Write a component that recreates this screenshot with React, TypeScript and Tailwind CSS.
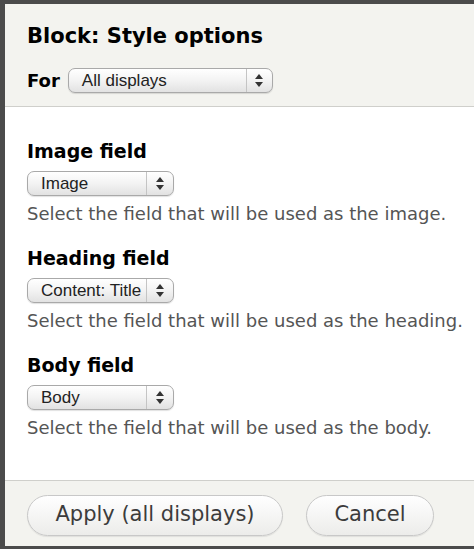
import { ReactNode } from "react";

function Arrows() {
  return (
    <svg width="8" height="13" viewBox="0 0 8 13" className="block">
      <path d="M4 0 L8 5 L0 5 Z" fill="#333" />
      <path d="M0 8 L8 8 L4 13 Z" fill="#333" />
    </svg>
  );
}

function Select({ value, width, arrowW = 27 }: { value: string; width: number; arrowW?: number }) {
  return (
    <div
      className="flex h-[25px] items-stretch rounded-[7px] border border-[#a9a9a9] bg-gradient-to-b from-[#ffffff] via-[#f3f3f3] to-[#e2e2e2] shadow-[0_1px_1px_rgba(0,0,0,0.12)]"
      style={{ width }}
    >
      <div className="flex flex-1 items-center overflow-hidden whitespace-nowrap pl-[13px] font-['Liberation_Sans',Arial,sans-serif] text-[17px] text-[#222]">
        {value}
      </div>
      <div className="flex items-center justify-center border-l border-[#c4c4c4]" style={{ width: arrowW }}>
        <Arrows />
      </div>
    </div>
  );
}

function Field({ label, value, desc }: { label: string; value: string; desc: ReactNode }) {
  return (
    <div className="flex flex-col">
      <div className="text-[19px] font-bold leading-[24px] text-black">{label}</div>
      <div className="mt-[8px]">
        <Select value={value} width={147} />
      </div>
      <div className="mt-[7px] whitespace-nowrap text-[18px] leading-[22px] text-[#555]">{desc}</div>
    </div>
  );
}

function Button({ children, width }: { children: ReactNode; width: number }) {
  return (
    <button
      className="flex h-[41px] items-center justify-center rounded-full border border-[#c8c8c8] bg-gradient-to-b from-[#ffffff] to-[#ececea] text-[21px] text-[#3c3c3c] shadow-[0_1px_1px_rgba(0,0,0,0.08)]"
      style={{ width }}
    >
      {children}
    </button>
  );
}

export default function App() {
  return (
    <div className="h-[549px] w-[474px] overflow-hidden bg-[#4b4b4b] pl-[5px] pt-[4px] pb-[3px] font-['DejaVu_Sans',Verdana,sans-serif]">
      <div className="flex h-full flex-col overflow-hidden bg-white">
        <div className="h-[103px] border-b border-[#cfcfcb] bg-[#f3f3ef] px-[22px] pt-[18px]">
          <div className="text-[21px] font-bold leading-[28px] text-black">Block: Style options</div>
          <div className="mt-[18px] flex items-center gap-[8px]">
            <span className="text-[18px] font-bold leading-[25px] text-black">For</span>
            <Select value="All displays" width={205} arrowW={26} />
          </div>
        </div>
        <div className="flex flex-1 flex-col gap-[21px] px-[22px] pt-[32px]">
          <Field label="Image field" value="Image" desc="Select the field that will be used as the image." />
          <Field label="Heading field" value="Content: Title" desc="Select the field that will be used as the heading." />
          <Field label="Body field" value="Body" desc="Select the field that will be used as the body." />
        </div>
        <div className="flex h-[66px] items-center gap-[23px] border-t border-[#cfcfcb] bg-[#f3f3ef] px-[22px] pt-[3px]">
          <Button width={256}>Apply (all displays)</Button>
          <Button width={128}>Cancel</Button>
        </div>
      </div>
    </div>
  );
}
